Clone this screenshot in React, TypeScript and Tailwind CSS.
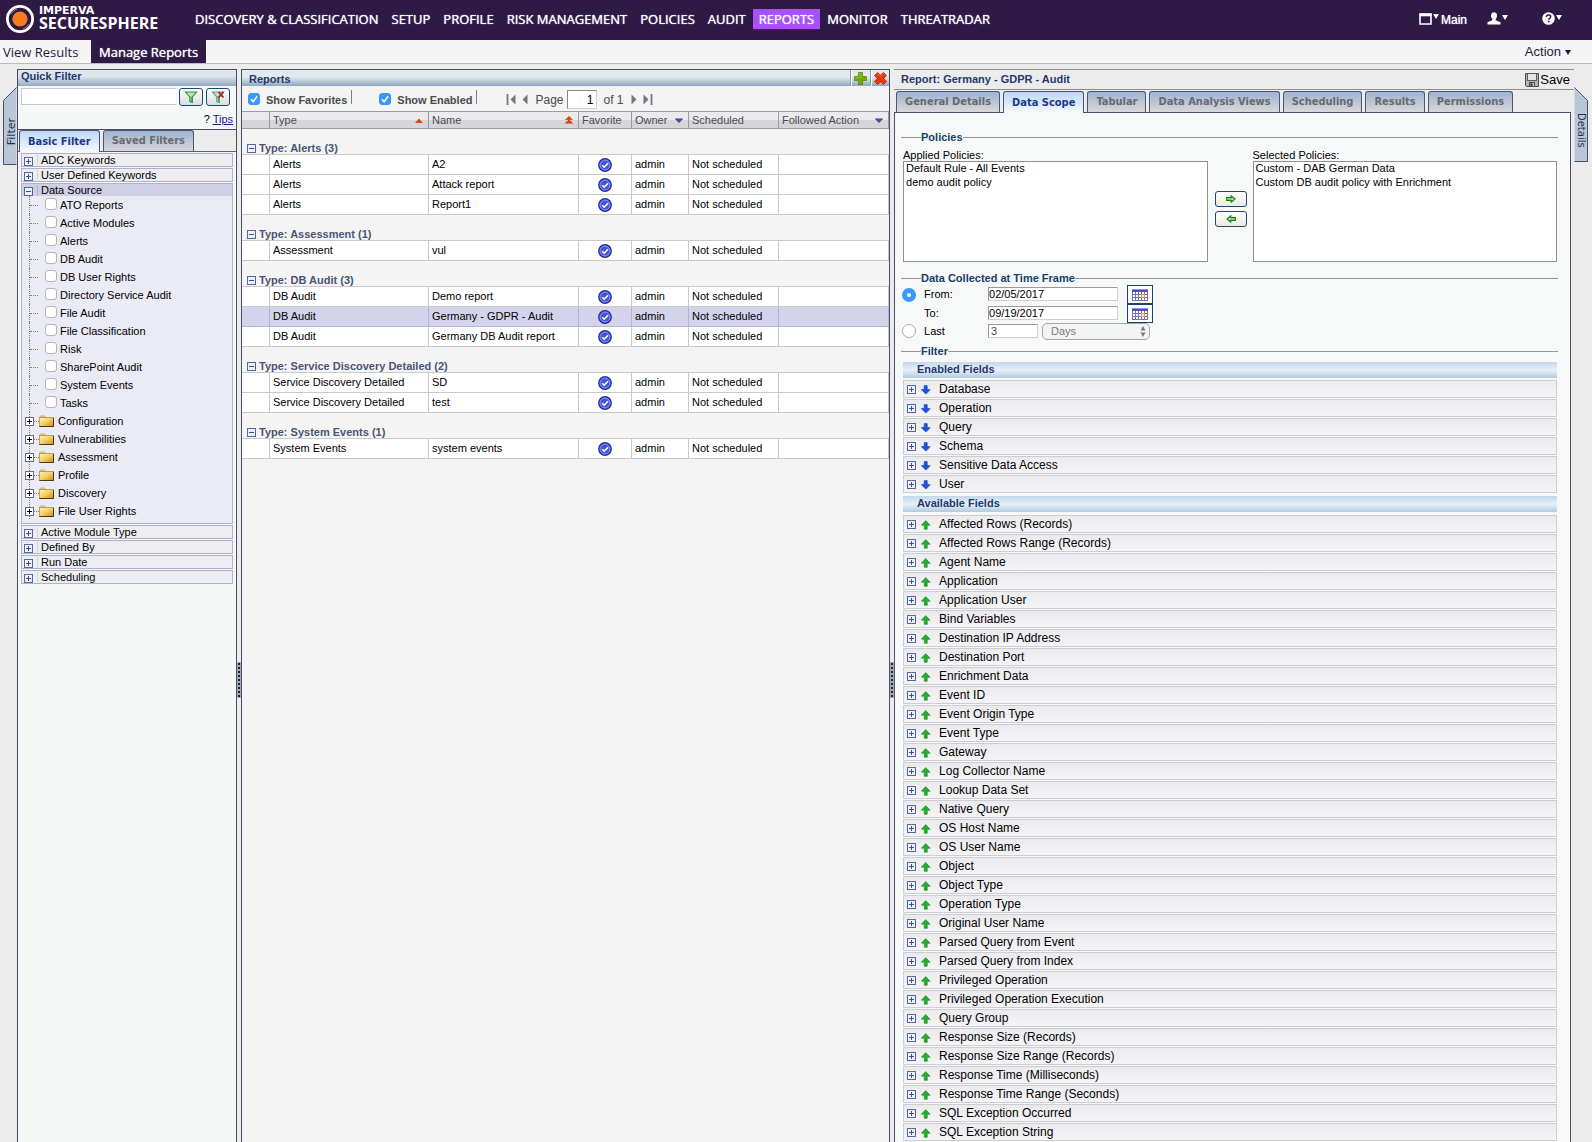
import { useState } from "react";
import type { ReactNode } from "react";

const NAV = [
  "DISCOVERY & CLASSIFICATION",
  "SETUP",
  "PROFILE",
  "RISK MANAGEMENT",
  "POLICIES",
  "AUDIT",
  "REPORTS",
  "MONITOR",
  "THREATRADAR",
];

const SOURCES = [
  "ATO Reports",
  "Active Modules",
  "Alerts",
  "DB Audit",
  "DB User Rights",
  "Directory Service Audit",
  "File Audit",
  "File Classification",
  "Risk",
  "SharePoint Audit",
  "System Events",
  "Tasks",
];

const FOLDERS = ["Configuration", "Vulnerabilities", "Assessment", "Profile", "Discovery", "File User Rights"];

const GROUPS = [
  { type: "Alerts", names: ["A2", "Attack report", "Report1"] },
  { type: "Assessment", names: ["vul"] },
  { type: "DB Audit", names: ["Demo report", "Germany - GDPR - Audit", "Germany DB Audit report"] },
  { type: "Service Discovery Detailed", names: ["SD", "test"] },
  { type: "System Events", names: ["system events"] },
];

const TABS = ["General Details", "Data Scope", "Tabular", "Data Analysis Views", "Scheduling", "Results", "Permissions"];

const ENABLED = ["Database", "Operation", "Query", "Schema", "Sensitive Data Access", "User"];

const AVAILABLE = [
  "Affected Rows (Records)",
  "Affected Rows Range (Records)",
  "Agent Name",
  "Application",
  "Application User",
  "Bind Variables",
  "Destination IP Address",
  "Destination Port",
  "Enrichment Data",
  "Event ID",
  "Event Origin Type",
  "Event Type",
  "Gateway",
  "Log Collector Name",
  "Lookup Data Set",
  "Native Query",
  "OS Host Name",
  "OS User Name",
  "Object",
  "Object Type",
  "Operation Type",
  "Original User Name",
  "Parsed Query from Event",
  "Parsed Query from Index",
  "Privileged Operation",
  "Privileged Operation Execution",
  "Query Group",
  "Response Size (Records)",
  "Response Size Range (Records)",
  "Response Time (Milliseconds)",
  "Response Time Range (Seconds)",
  "SQL Exception Occurred",
  "SQL Exception String",
];

/* ---------- icons ---------- */

function Logo() {
  return (
    <svg width="30" height="30" viewBox="0 0 30 30" aria-hidden="true">
      <circle cx="15" cy="15" r="12.6" fill="none" stroke="#fff" strokeWidth="2.8" />
      <circle cx="15" cy="15" r="10" fill="#2e1a45" />
      <path d="M6 10a10 10 0 0 1 6-5M24 20a10 10 0 0 1-6 5" stroke="#8f839d" strokeWidth="1" fill="none" />
      <circle cx="15" cy="15" r="7.6" fill="#f47b20" />
    </svg>
  );
}

function Caret({ className }: { className: string }) {
  return (
    <svg width="6" height="5" viewBox="0 0 6 5" className={className} aria-hidden="true">
      <path d="M0 0h6L3 5z" fill="currentColor" />
    </svg>
  );
}

function BoxSign({ open, dark }: { open?: boolean; dark?: boolean }) {
  const edge = dark ? "#6d6d6d" : "#5468a0";
  const sign = dark ? "#000" : "#3d5290";
  return (
    <svg width="9" height="9" viewBox="0 0 9 9" className="shrink-0" aria-hidden="true" shapeRendering="crispEdges">
      <rect x="0.5" y="0.5" width="8" height="8" fill={dark ? "#fff" : "#eef1f9"} stroke={edge} />
      <path d={open ? "M2 4.5h5" : "M2 4.5h5M4.5 2v5"} stroke={sign} />
    </svg>
  );
}

function Folder() {
  return (
    <svg width="15" height="12" viewBox="0 0 15 12" className="shrink-0" aria-hidden="true">
      <defs>
        <linearGradient id="folder" x1="0" y1="0" x2="1" y2="1">
          <stop offset="0" stopColor="#fff3bd" />
          <stop offset="0.5" stopColor="#f5cf62" />
          <stop offset="1" stopColor="#c98a14" />
        </linearGradient>
      </defs>
      <path d="M0.5 2.5l1-1.5h4l1 1.5z" fill="#f4e3a2" stroke="#b39a52" strokeWidth="0.8" />
      <rect x="0.5" y="2.5" width="14" height="9" fill="url(#folder)" stroke="#b08f3e" strokeWidth="0.8" />
      <path d="M0.5 11.6h14.1V3" fill="none" stroke="#40300a" strokeWidth="1" />
    </svg>
  );
}

function Funnel({ clear }: { clear?: boolean }) {
  return (
    <svg width="14" height="13" viewBox="0 0 14 13" aria-hidden="true">
      <path d="M1.5 1h11L8.4 6v5.5l-2.6-1V6z" fill="#bfe8c2" stroke={clear ? "#5d9c63" : "#1f9a34"} strokeWidth="1.1" />
      <path d="M6.2 6h1.2v5" stroke="#27b53f" fill="none" />
      {clear && <path d="M7.5 1l5 5.500M12.500 1l-5 5.500" stroke="#c01430" strokeWidth="1.800" />}
    </svg>
  );
}

function PlusGreen() {
  return (
    <svg width="13" height="13" viewBox="0 0 13 13" aria-hidden="true">
      <path d="M4.5 0.5h4v4h4v4h-4v4h-4v-4h-4v-4h4z" fill="#76a80c" stroke="#5c8a06" strokeWidth="0.8" />
      <path d="M5.2 1.4h1.4v4.2H1.4" stroke="#9dcb3a" strokeWidth="0.8" fill="none" />
    </svg>
  );
}

function CrossRed() {
  return (
    <svg width="13" height="13" viewBox="0 0 13 13" aria-hidden="true">
      <path
        d="M3.5 0.5l3 2.6 3-2.6 3 3-2.6 3 2.6 3-3 3-3-2.6-3 2.6-3-3 2.6-3-2.6-3z"
        fill="#e23a10"
        stroke="#b52605"
        strokeWidth="0.8"
      />
      <path d="M2 3.4l1.6-1.6 3 2.6 3-2.6" stroke="#f5744e" strokeWidth="0.8" fill="none" />
    </svg>
  );
}

function FavoriteCheck() {
  return (
    <svg width="14" height="14" viewBox="0 0 14 14" role="img" aria-label="Favorite" className="mx-auto">
      <circle cx="7" cy="7" r="6.3" fill="#4453dd" stroke="#2a2f86" strokeWidth="1.2" />
      <circle cx="7" cy="7" r="4.9" fill="none" stroke="#8d9af5" strokeWidth="0.9" />
      <path d="M4.2 7.2l2 2 3.8-4" stroke="#fff" strokeWidth="1.6" fill="none" />
    </svg>
  );
}

function FieldArrow({ down }: { down?: boolean }) {
  return (
    <svg width="10" height="10" viewBox="0 0 10 10" className="shrink-0" aria-hidden="true">
      {down ? (
        <>
          <path d="M3.8 1.2h3v4h3L5.6 9.8 1 5.2" fill="#c2c6d0" />
          <path d="M3.2 0.5h3v4h3L4.7 9 0.2 4.5h3z" fill="#1c52dc" stroke="#0d3cb4" strokeWidth="0.5" />
        </>
      ) : (
        <>
          <path d="M3.8 9.8h3v-4h3L5.6 1.2" fill="#c6cdc6" />
          <path d="M3.2 9.2h3v-4h3L4.7 0.6 0.2 5.2h3z" fill="#25ac2c" stroke="#128a1a" strokeWidth="0.5" />
        </>
      )}
    </svg>
  );
}

function MoveArrow({ left }: { left?: boolean }) {
  return (
    <svg width="10" height="8" viewBox="0 0 10 8" className={left ? "rotate-180" : ""} aria-hidden="true">
      <path d="M0.6 2.6h4.6V0.8L9 4 5.2 7.2V5.4H0.6z" fill="#a8e6a4" stroke="#137a18" strokeWidth="1.1" />
    </svg>
  );
}

function Calendar() {
  return (
    <svg width="16" height="12" viewBox="0 0 16 12" aria-hidden="true" shapeRendering="crispEdges">
      <rect width="16" height="12" fill="#fff" />
      <rect width="16" height="3" fill="#4a4fc8" />
      <rect width="16" height="1" fill="#8d92e6" />
      <path d="M0.5 3v9M3.5 3v9M6.5 3v9M9.5 3v9M12.5 3v9M15.5 3v9M0 5.5h16M0 8.5h16M0 11.5h16" stroke="#6f73b8" />
      <rect x="9" y="5" width="4" height="4" fill="#e89a4c" />
      <rect x="10" y="6" width="2" height="2" fill="#fde6c4" />
    </svg>
  );
}

function Floppy() {
  return (
    <svg width="14" height="14" viewBox="0 0 14 14" aria-hidden="true">
      <path d="M0.5 0.5h13v13h-12l-1-1z" fill="#b4b4b4" stroke="#4b4b4b" />
      <rect x="2.5" y="0.5" width="9" height="7" fill="#e4e4e4" stroke="#5c5c5c" />
      <rect x="4.5" y="9.5" width="5" height="4" fill="#cfcfcf" stroke="#4b4b4b" />
      <rect x="5.5" y="10.4" width="2" height="2.4" fill="#222" />
    </svg>
  );
}

function PageArrow({ kind }: { kind: "first" | "prev" | "next" | "last" }) {
  const flip = kind === "first" || kind === "prev";
  const bar = kind === "first" || kind === "last";
  return (
    <svg width={bar ? 10 : 6} height="11" viewBox={bar ? "0 0 10 11" : "0 0 6 11"} className={flip ? "rotate-180" : ""} aria-hidden="true">
      <path d="M0.5 0.5l5 5-5 5z" fill="#6c7a80" />
      {bar && <path d="M8.5 0v11" stroke="#6c7a80" strokeWidth="1.8" />}
    </svg>
  );
}

/* ---------- shared pieces ---------- */

function CheckBox({ id, defaultChecked }: { id: string; defaultChecked?: boolean }) {
  return (
    <span className="grid h-3 w-3 shrink-0">
      <input
        id={id}
        type="checkbox"
        defaultChecked={defaultChecked}
        className="peer col-start-1 row-start-1 h-3 w-3 appearance-none rounded-[3px] border border-[#b4b4b8] bg-white checked:border-[#3b99fc] checked:bg-[#3b99fc]"
      />
      <svg viewBox="0 0 12 12" className="pointer-events-none invisible col-start-1 row-start-1 h-3 w-3 peer-checked:visible" aria-hidden="true">
        <path d="M3 6.3l2.1 2.4L9.2 3.2" stroke="#fff" strokeWidth="1.5" fill="none" />
      </svg>
    </span>
  );
}

function Tab({ label, active, onClick }: { label: string; active: boolean; onClick: () => void }) {
  const look = active
    ? "h-[22px] bg-linear-to-b from-[#bdd7f9] to-[#f6f9fb] text-[#1b3a86]"
    : "mb-px h-[21px] bg-linear-to-b from-[#9db4d3] to-[#d8d8d8] text-[#686a6e]";
  return (
    <button
      type="button"
      role="tab"
      aria-selected={active}
      onClick={onClick}
      className={`rounded-t-[3px] border-x border-t border-[#4f5570] px-2 font-['DejaVu_Sans_Condensed','DejaVu_Sans',sans-serif] text-[11px] leading-5 font-bold whitespace-nowrap ${look}`}
    >
      {label}
    </button>
  );
}

function FilterSideTab() {
  return (
    <button type="button" className="relative flex h-[78px] w-3.5 items-end justify-center pl-1 text-[#26304a]">
      <svg viewBox="0 0 14 78" className="absolute inset-0" aria-hidden="true">
        <path d="M13.5 0.5L0.5 13.5v64h13" fill="#b9c6d6" stroke="#4a5068" />
      </svg>
      <span className="relative rotate-180 pt-5 font-['DejaVu_Sans',sans-serif] text-[11px] leading-[14px] [writing-mode:vertical-rl]">
        Filter
      </span>
    </button>
  );
}

function DetailsSideTab() {
  return (
    <button type="button" className="relative flex h-[75px] w-3.5 items-end justify-center text-[#26304a]">
      <svg viewBox="0 0 14 75" className="absolute inset-0" aria-hidden="true">
        <path d="M0.5 0.5L13.5 13.5v61H0.5" fill="#b9c6d6" stroke="#4a5068" />
      </svg>
      <span className="relative pb-3.5 font-['DejaVu_Sans',sans-serif] text-[10px] leading-[14px] [writing-mode:vertical-rl]">
        Details
      </span>
    </button>
  );
}

function Splitter() {
  return (
    <div className="flex w-1 shrink-0 flex-col justify-center bg-[#ececec] pt-[148px]">
      <div className="flex h-9 flex-col items-center justify-around bg-[#a4abb2]">
        {Array.from({ length: 9 }, (_, i) => (
          <span key={i} className="h-0.5 w-0.5 bg-[#1d2733]" />
        ))}
      </div>
    </div>
  );
}

function AccordionRow({ label }: { label: string }) {
  return (
    <button type="button" className="mb-px flex h-3.5 w-full items-center border border-[#b0b0d0] bg-[#eeeef1] pl-0.5 text-left leading-3">
      <span className="pt-0.5">
        <BoxSign />
      </span>
      <span className="ml-1 h-2.5 border-l border-[#d4d4d8] pl-[3px] leading-[10px]">{label}</span>
    </button>
  );
}

function FieldRow({ label, down }: { label: string; down?: boolean }) {
  return (
    <li className="mb-px">
      <button
        type="button"
        className="flex h-[18px] w-full items-center border border-[#cdced4] bg-linear-to-b from-[#ebebee] to-[#f4f4f6] pl-[3px] text-left text-xs leading-4"
      >
        <BoxSign />
        <span className="ml-[5px] pt-0.5">
          <FieldArrow down={down} />
        </span>
        <span className="ml-2">{label}</span>
      </button>
    </li>
  );
}

function FieldBar({ children }: { children: ReactNode }) {
  return (
    <h3 className="mb-0.5 h-4 bg-linear-to-b from-[#c3d8ea] via-[#e6f0f8] to-[#b3cbe2] pl-3.5 text-[11px] leading-[14px] font-bold text-[#26386e]">
      {children}
    </h3>
  );
}

function Legend({ children }: { children: ReactNode }) {
  return <legend className="ml-5 text-[11px] leading-[14px] font-bold text-[#17406b]">{children}</legend>;
}

/* ---------- sections ---------- */

function TopBar() {
  return (
    <header className="flex h-10 items-center bg-[#2e1a45] pb-[3px] text-white">
      <a href="#home" className="flex w-[189px] shrink-0 items-center pl-[5px]">
        <Logo />
        <span className="ml-1 flex flex-col pb-px">
          <span className="font-['DejaVu_Sans',sans-serif] text-[11px] leading-[11px] font-bold">IMPERVA</span>
          <span className="font-['Open_Sans',sans-serif] text-base leading-[15px] font-bold">SECURESPHERE</span>
        </span>
      </a>
      <nav className="flex gap-px font-['Open_Sans',sans-serif] text-[13px] leading-5 [text-shadow:0_0_1px_#fff]">
        {NAV.map((item) => (
          <a
            key={item}
            href="#nav"
            className={
              item === "REPORTS"
                ? "bg-[#a552fb] px-1.5 whitespace-nowrap shadow-[0_1px_#14356e]"
                : "px-1.5 whitespace-nowrap"
            }
          >
            {item}
          </a>
        ))}
      </nav>
      <div className="ml-auto flex items-center pr-[30px]">
        <button type="button" className="flex items-center text-xs [text-shadow:0_0_1px_#fff]">
          <svg width="13" height="12" viewBox="0 0 13 12" aria-hidden="true">
            <path d="M1 1h11v10H1z" fill="none" stroke="#fff" strokeWidth="1.6" />
            <path d="M0.5 2h12" stroke="#fff" strokeWidth="2.600" />
          </svg>
          <Caret className="mb-1 ml-px" />
          <span className="mt-[3px] ml-0.5">Main</span>
        </button>
        <button type="button" aria-label="User" className="ml-5 flex items-center">
          <svg width="14" height="13" viewBox="0 0 14 13" aria-hidden="true">
            <path d="M7 0.3c2 0 3 1.4 3 3.2 0 1.500-.5 2.800-1.300 3.500v1.200L13.500 10.200V12.500H.5V10.200L5.300 8.200V7C4.500 6.300 4 5 4 3.500 4 1.700 5 .3 7 .3z" fill="#fff" />
          </svg>
          <Caret className="mb-0.5 ml-px" />
        </button>
        <button type="button" aria-label="Help" className="ml-[34px] flex items-center">
          <svg width="13" height="13" viewBox="0 0 13 13" aria-hidden="true">
            <circle cx="6.500" cy="6.500" r="6.300" fill="#fff" />
            <path d="M4.300 5c0-1.300.9-2.100 2.200-2.100s2.200.8 2.200 1.900c0 1.500-1.900 1.500-1.900 3" stroke="#2e1a45" strokeWidth="1.500" fill="none" />
            <rect x="5.900" y="8.700" width="1.700" height="1.600" fill="#2e1a45" />
          </svg>
          <Caret className="mb-0.5 ml-px" />
        </button>
      </div>
    </header>
  );
}

function FilterPane() {
  const [tab, setTab] = useState("Basic Filter");
  return (
    <aside className="flex w-[220px] shrink-0 flex-col border-x border-[#4a4f66] bg-[#f6f8f8]">
      <section className="h-[61px] border-y border-[#4a4f66]">
        <h2 className="h-4 bg-linear-to-b from-[#dde6ed] from-40% to-[#93a9bf] pl-[3px] text-[11px] leading-3 font-bold text-[#26386e]">
          Quick Filter
        </h2>
        <div className="mt-0.5 flex pl-[3px]">
          <input
            type="text"
            aria-label="Quick filter"
            className="h-[17px] w-0 flex-1 border-y border-l border-[#c8c8c8] bg-white px-1 text-[11px]"
          />
          <button type="button" aria-label="Apply filter" className="ml-[3px] grid h-[18px] w-6 place-items-center rounded-[3px] border border-[#1d4a74] bg-linear-to-b from-white to-[#dcdcdc]">
            <Funnel />
          </button>
          <button type="button" aria-label="Clear filter" className="mr-1.5 ml-[3px] grid h-[18px] w-6 place-items-center rounded-[3px] border border-[#1d4a74] bg-linear-to-b from-white to-[#dcdcdc]">
            <Funnel clear />
          </button>
        </div>
        <p className="mt-[5px] pr-[3px] text-right text-[11px] leading-4">
          ?{" "}
          <a href="#tips" className="text-[#1a1a80] underline">
            Tips
          </a>
        </p>
      </section>
      <div role="tablist" className="flex h-[22px] items-end gap-[3px] bg-[#ececec] pl-px [box-shadow:inset_0_-1px_#5a607a]">
        {["Basic Filter", "Saved Filters"].map((t) => (
          <Tab key={t} label={t} active={t === tab} onClick={() => setTab(t)} />
        ))}
      </div>
      <div className="px-[3px] pt-px text-[11px]">
        <AccordionRow label="ADC Keywords" />
        <AccordionRow label="User Defined Keywords" />
        <div className="mb-px border border-[#b0b0d0] bg-[#ebebf6]">
          <button type="button" className="flex h-3 w-full items-center bg-[#cfcfe6] pl-0.5 text-left">
            <span className="pt-0.5">
              <BoxSign open />
            </span>
            <span className="ml-1 h-2.5 border-l border-[#b0b0d0] pl-[3px] leading-[10px]">Data Source</span>
          </button>
          <ul className="pb-[3px]">
            {SOURCES.map((s) => (
              <li key={s} className="ml-[7px] flex h-[18px] items-center border-l border-dotted border-[#808080]">
                <span className="w-2 border-t border-dotted border-[#808080]" />
                <span className="ml-[7px] pb-0.5">
                  <CheckBox id={`src-${s}`} />
                </span>
                <label htmlFor={`src-${s}`} className="ml-[3px] leading-[18px]">
                  {s}
                </label>
              </li>
            ))}
            {FOLDERS.map((f) => (
              <li key={f} className="flex h-[18px] items-center bg-[linear-gradient(to_bottom,#808080_50%,transparent_50%)] bg-[length:1px_2px] bg-[position:7px_0] bg-repeat-y pl-[3px]">
                <BoxSign dark />
                <span className="w-[5px] border-t border-dotted border-[#808080]" />
                <Folder />
                <span className="ml-1">{f}</span>
              </li>
            ))}
          </ul>
        </div>
        {["Active Module Type", "Defined By", "Run Date", "Scheduling"].map((l) => (
          <AccordionRow key={l} label={l} />
        ))}
      </div>
    </aside>
  );
}

function SortUp({ double }: { double?: boolean }) {
  return (
    <svg width="8" height="8" viewBox="0 0 8 8" aria-hidden="true">
      {double ? <path d="M4 0l4 4H0zM4 3l4 4.500H0z" fill="#dd4410" stroke="#dd4410" strokeWidth="0.200" /> : <path d="M4 2.500L8 7H0z" fill="#dd4410" />}
      {double && <path d="M1 4.300h2M5 4.300h2" stroke="#f5d6ca" strokeWidth="0.800" />}
    </svg>
  );
}

function SortDown() {
  return (
    <svg width="8" height="8" viewBox="0 0 8 8" aria-hidden="true">
      <path d="M0 3h8L4 7z" fill="#4a4f9c" />
      <path d="M0 2.500h8" stroke="#8c90c4" strokeWidth="1" />
    </svg>
  );
}

function HeadCell({ label, mark }: { label: string; mark?: ReactNode }) {
  return (
    <th
      scope="col"
      className="border-y border-r border-[#9a9aa2] bg-linear-to-b from-[#ebebee] from-50% to-[#d6d6da] to-50% p-0 pr-[5px] pl-[3px] text-left font-normal text-[#4b4b4b]"
    >
      <span className="flex items-center justify-between leading-[14px] whitespace-nowrap">
        {label}
        {mark}
      </span>
    </th>
  );
}

function ReportsPane() {
  const [selected, setSelected] = useState("Germany - GDPR - Audit");
  return (
    <section className="min-w-0 flex-[648_1_0%] border-x border-t border-[#4a4f66] bg-[#f4f4f4] text-[11px]">
      <div className="flex h-4 items-stretch bg-linear-to-b from-[#e2eaef] from-45% to-[#8ea7be]">
        <h2 className="pt-px pl-[7px] leading-[17px] font-bold text-[#26386e]">Reports</h2>
        <button type="button" aria-label="Add report" className="ml-auto grid w-5 place-items-center border-l border-[#8f9aa5] shadow-[inset_1px_0_#fff]">
          <PlusGreen />
        </button>
        <button type="button" aria-label="Delete report" className="grid w-[19px] place-items-center border-l border-[#8f9aa5] shadow-[inset_1px_0_#fff]">
          <CrossRed />
        </button>
      </div>
      <div className="flex h-[25px] items-center pl-1.5 text-[#4b4b4b]">
        <CheckBox id="show-fav" defaultChecked />
        <label htmlFor="show-fav" className="ml-1.5 pt-[3px] font-bold">
          Show Favorites
        </label>
        <span className="mb-1 ml-1 h-3.5 border-l border-[#808080]" />
        <span className="w-[27px]" />
        <CheckBox id="show-enabled" defaultChecked />
        <label htmlFor="show-enabled" className="ml-1.5 pt-[3px] font-bold">
          Show Enabled
        </label>
        <span className="mb-1 ml-1 h-3.5 border-l border-[#808080]" />
        <div className="ml-[29px] flex items-center pt-0.5 text-xs">
          <button type="button" aria-label="First page">
            <PageArrow kind="first" />
          </button>
          <button type="button" aria-label="Previous page" className="ml-1.5">
            <PageArrow kind="prev" />
          </button>
          <label htmlFor="page" className="ml-[7px]">
            Page
          </label>
          <input
            id="page"
            defaultValue="1"
            className="mr-1 ml-[3px] h-[19px] w-[30px] border border-[#cfcfcf] border-t-[#8a8a8a] border-l-[#8a8a8a] bg-white pr-0.5 text-right text-xs text-black"
          />
          <span className="ml-[3px]">of 1</span>
          <button type="button" aria-label="Next page" className="ml-[7px]">
            <PageArrow kind="next" />
          </button>
          <button type="button" aria-label="Last page" className="ml-1.5">
            <PageArrow kind="last" />
          </button>
        </div>
      </div>
      <table className="w-full table-fixed border-separate border-spacing-0">
        <colgroup>
          <col className="w-7" />
          <col className="w-[159px]" />
          <col className="w-[150px]" />
          <col className="w-[53px]" />
          <col className="w-[57px]" />
          <col className="w-[90px]" />
          <col />
        </colgroup>
        <thead>
          <tr className="h-[18px]">
            <HeadCell label="" />
            <HeadCell label="Type" mark={<SortUp />} />
            <HeadCell label="Name" mark={<SortUp double />} />
            <HeadCell label="Favorite" />
            <HeadCell label="Owner" mark={<SortDown />} />
            <HeadCell label="Scheduled" />
            <HeadCell label="Followed Action" mark={<SortDown />} />
          </tr>
        </thead>
        {GROUPS.map((g) => (
          <tbody key={g.type}>
            <tr className="h-[26px]">
              <th colSpan={7} scope="rowgroup" className="border-b border-[#c9c9c9] p-0 pl-[5px] text-left align-bottom font-bold text-[#4a5675]">
                <button type="button" className="flex items-center gap-[3px] leading-[11px]">
                  <BoxSign open />
                  {`Type: ${g.type} (${g.names.length})`}
                </button>
              </th>
            </tr>
            {g.names.map((n) => {
              const on = n === selected;
              const cell = on
                ? "border-r border-b border-[#b4b4da] bg-[#d3d4ec] p-0 px-[3px] leading-[15px]"
                : "border-r border-b border-[#c9c9c9] bg-white p-0 px-[3px] leading-[15px]";
              return (
                <tr key={n} className="h-5 cursor-default" aria-selected={on} onClick={() => setSelected(n)}>
                  <td className={cell} />
                  <td className={cell}>{g.type}</td>
                  <td className={cell}>{n}</td>
                  <td className={cell}>
                    <FavoriteCheck />
                  </td>
                  <td className={cell}>admin</td>
                  <td className={cell}>Not scheduled</td>
                  <td className={cell} />
                </tr>
              );
            })}
          </tbody>
        ))}
      </table>
    </section>
  );
}

function PolicyList({ id, label, items }: { id: string; label: string; items: string[] }) {
  return (
    <div className="min-w-0 flex-1">
      <label htmlFor={id} className="block pt-px leading-3">
        {label}
      </label>
      <select id={id} multiple className="block h-[101px] w-full overflow-hidden border border-[#8f8f8f] bg-white p-0 text-[11px]">
        {items.map((i) => (
          <option key={i} className="h-3.5 min-h-3.5 p-0 pl-0.5 leading-[14px]">
            {i}
          </option>
        ))}
      </select>
    </div>
  );
}

function DateRow({ id, label, value, radio }: { id: string; label: string; value: string; radio?: boolean }) {
  return (
    <div className="flex h-[19px] items-center">
      <span className="w-[23px]">{radio && <Radio id="range" defaultChecked />}</span>
      <label htmlFor={id} className="w-16">
        {label}
      </label>
      <input
        id={id}
        defaultValue={value}
        className="mb-0.5 h-3.5 w-[130px] border border-[#d0d0d0] border-t-[#999] border-l-[#999] bg-white text-[11px] leading-3"
      />
      <button type="button" aria-label="Pick date" className="ml-[9px] grid h-[19px] w-[26px] place-items-center border border-[#174468] bg-white">
        <Calendar />
      </button>
    </div>
  );
}

function Radio({ id, defaultChecked }: { id: string; defaultChecked?: boolean }) {
  return (
    <input
      id={id}
      type="radio"
      name="frame"
      aria-label={defaultChecked ? "Date range" : "Last period"}
      defaultChecked={defaultChecked}
      className="ml-px block h-3.5 w-3.5 appearance-none rounded-full border border-[#acacac] bg-white checked:border-[5px] checked:border-[#3b99fc]"
    />
  );
}

function ReportPane() {
  const [tab, setTab] = useState("Data Scope");
  return (
    <section className="flex min-w-0 flex-[681_1_0%] flex-col text-[11px]">
      <div className="flex h-[21px] items-center justify-between border-y border-[#8f8f94] pl-[7px]">
        <h2 className="font-bold text-[#26386e]">Report: Germany - GDPR - Audit</h2>
        <button type="button" className="flex items-center gap-px pr-1 text-[13px] leading-4">
          <Floppy />
          Save
        </button>
      </div>
      <div role="tablist" className="mr-[3px] flex h-[23px] items-end gap-[3px] pl-0.5 [box-shadow:inset_0_-1px_#4a4f66]">
        {TABS.map((t) => (
          <Tab key={t} label={t} active={t === tab} onClick={() => setTab(t)} />
        ))}
      </div>
      <div className="mr-[3px] flex-1 border-x border-[#4a4f66] bg-[#f6f9f8] pt-[17px] pr-3 pl-1.5">
        <fieldset className="min-w-0 border-t border-[#969696]">
          <Legend>Policies</Legend>
          <div className="flex pt-1 pr-px pl-0.5">
            <PolicyList id="applied" label="Applied Policies:" items={["Default Rule - All Events", "demo audit policy"]} />
            <div className="mr-1.5 ml-[7px] flex flex-col gap-1 pt-[43px]">
              <button type="button" aria-label="Add policy" className="grid h-4 w-8 place-items-center rounded-[3px] border border-[#1d4a74] bg-linear-to-b from-white to-[#ebebe2]">
                <MoveArrow />
              </button>
              <button type="button" aria-label="Remove policy" className="grid h-4 w-8 place-items-center rounded-[3px] border border-[#1d4a74] bg-linear-to-b from-white to-[#ebebe2]">
                <MoveArrow left />
              </button>
            </div>
            <PolicyList
              id="selected"
              label="Selected Policies:"
              items={["Custom - DAB German Data", "Custom DB audit policy with Enrichment"]}
            />
          </div>
        </fieldset>
        <fieldset className="mt-[9px] min-w-0 border-t border-[#969696]">
          <Legend>Data Collected at Time Frame</Legend>
          <DateRow id="from" label="From:" value="02/05/2017" radio />
          <DateRow id="to" label="To:" value="09/19/2017" />
          <div className="flex h-[18px] items-center pb-0.5">
            <span className="w-[23px]">
              <Radio id="last-on" />
            </span>
            <label htmlFor="last" className="w-16">
              Last
            </label>
            <input
              id="last"
              defaultValue="3"
              className="h-3.5 w-[50px] border border-[#d0d0d0] border-t-[#999] border-l-[#999] bg-white px-0.5 text-[11px] leading-3 text-[#4b4b4b]"
            />
            <span className="ml-1 grid w-[108px] items-center">
              <select
                aria-label="Unit"
                className="col-start-1 row-start-1 h-[17px] appearance-none rounded-[5px] border border-[#a6a6a6] bg-[#f3f4f4] pl-2 text-[11px] leading-[14px] text-[#7a7a7a]"
              >
                <option>Days</option>
              </select>
              <svg width="6" height="11" viewBox="0 0 6 11" className="pointer-events-none col-start-1 row-start-1 mr-1 justify-self-end" aria-hidden="true">
                <path d="M3 0l2.500 4.500h-5zM3 11L.5 6.500h5z" fill="#7a7a7a" />
              </svg>
            </span>
          </div>
        </fieldset>
        <fieldset className="mt-[3px] min-w-0 border-t border-[#969696]">
          <Legend>Filter</Legend>
          <div className="pt-1 pr-px pl-0.5">
            <FieldBar>Enabled Fields</FieldBar>
            <ul className="mb-[3px]">
              {ENABLED.map((f) => (
                <FieldRow key={f} label={f} down />
              ))}
            </ul>
            <FieldBar>Available Fields</FieldBar>
            <ul className="-mb-px pt-px">
              {AVAILABLE.map((f) => (
                <FieldRow key={f} label={f} />
              ))}
            </ul>
          </div>
        </fieldset>
      </div>
    </section>
  );
}

export default function App() {
  return (
    <div className="flex min-h-screen flex-col bg-[#ececec] font-['Liberation_Sans',Arial,sans-serif] text-black">
      <TopBar />
      <div className="flex h-6 items-stretch justify-between border-b border-[#b9b9cc] bg-[#f5f5f5]">
        <nav className="flex font-['Open_Sans',sans-serif] text-[13px] leading-6 text-[#24193a]">
          <a href="#results" className="w-[91px] pl-[3px]">
            View Results
          </a>
          <a href="#manage" className="bg-[#2e1a45] px-2 text-white [text-shadow:0_0_1px_#fff]">
            Manage Reports
          </a>
        </nav>
        <button type="button" className="flex items-center gap-1 pt-px pr-[21px] text-[13px] text-[#24193a]">
          Action
          <Caret className="text-[#24193a]" />
        </button>
      </div>
      <main className="flex flex-1 items-stretch pt-[5px]">
        <div className="flex w-[17px] shrink-0 justify-end pt-[18px]">
          <FilterSideTab />
        </div>
        <FilterPane />
        <Splitter />
        <ReportsPane />
        <Splitter />
        <ReportPane />
        <div className="w-[18px] shrink-0 pt-[18px]">
          <DetailsSideTab />
        </div>
      </main>
    </div>
  );
}
